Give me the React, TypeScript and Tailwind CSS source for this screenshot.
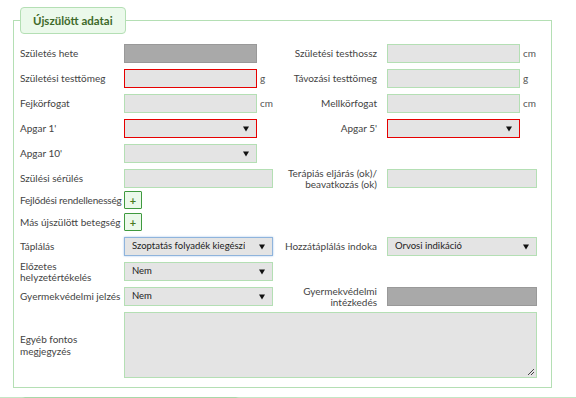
import React from 'react';

const box = 'h-[19px] bg-[#e4e4e4] border border-[#b4dfb4]';
const redBox = 'h-[19px] bg-[#e4e4e4] border border-[#e60000]';
const darkBox = 'h-[19px] bg-[#a9a9a9] border border-[#999999]';

function Arrow() {
  return (
    <svg width="6" height="6" viewBox="0 0 6 6" className="shrink-0">
      <path d="M0 0.5 H6 L3 5.5 Z" fill="#111" />
    </svg>
  );
}

function Select({ width, value, className }: { width: string; value?: string; className: string }) {
  return (
    <div className={`${className} ${width} flex items-center justify-between gap-[3px] pl-[7px] pr-[7px]`}>
      <span className="min-w-0 text-[9.5px] text-[#222] whitespace-nowrap overflow-hidden">{value}</span>
      <Arrow />
    </div>
  );
}

function Unit({ children }: { children: React.ReactNode }) {
  return <span className="ml-[3px] text-[10px] text-[#555]">{children}</span>;
}

function Left({ label, children }: { label: React.ReactNode; children?: React.ReactNode }) {
  return (
    <div className="w-[267px] shrink-0 flex items-center">
      <div className="w-[104px] shrink-0 leading-[11px] whitespace-nowrap">{label}</div>
      {children}
    </div>
  );
}

function Right({ label, children }: { label: React.ReactNode; children?: React.ReactNode }) {
  return (
    <div className="flex items-center">
      <div className="w-[90px] shrink-0 flex justify-end text-right leading-[11px] whitespace-nowrap">{label}</div>
      <div className="ml-[10px] flex items-center">{children}</div>
    </div>
  );
}

function PlusButton() {
  return (
    <div className="w-[18px] h-[18px] border border-[#3f9a3f] bg-[#ebf9eb] rounded-[1px] flex items-center justify-center text-[#4a7a1e] text-[11px] font-bold leading-none">
      +
    </div>
  );
}

export default function App() {
  return (
    <div className="w-[576px] h-[398px] bg-white overflow-hidden text-[10px] text-[#444]" style={{ fontFamily: 'Lato, "Open Sans", sans-serif' }}>
      <fieldset className="ml-[13px] mt-[7px] w-[539px] border border-[#b4dfb4] pl-[6px] pb-[9px]">
        <legend className="ml-0 px-[12px] h-[27px] flex items-center bg-[#ebf9eb] border border-[#b4dfb4] rounded-[4px] text-[11.5px] font-bold text-[#3e6a2a]">
          Újszülött adatai
        </legend>

        <div className="flex flex-col pt-[10px]">
          <div className="flex items-center h-[19px]">
            <Left label="Születés hete">
              <div className={`${darkBox} w-[133px]`} />
            </Left>
            <Right label="Születési testhossz">
              <div className={`${box} w-[133px]`} />
              <Unit>cm</Unit>
            </Right>
          </div>

          <div className="flex items-center h-[19px] mt-[6px]">
            <Left label="Születési testtömeg">
              <div className={`${redBox} w-[133px]`} />
              <Unit>g</Unit>
            </Left>
            <Right label="Távozási testtömeg">
              <div className={`${box} w-[133px]`} />
              <Unit>g</Unit>
            </Right>
          </div>

          <div className="flex items-center h-[19px] mt-[6px]">
            <Left label="Fejkörfogat">
              <div className={`${box} w-[133px]`} />
              <Unit>cm</Unit>
            </Left>
            <Right label="Mellkörfogat">
              <div className={`${box} w-[133px]`} />
              <Unit>cm</Unit>
            </Right>
          </div>

          <div className="flex items-center h-[19px] mt-[6px]">
            <Left label="Apgar 1'">
              <Select width="w-[133px]" className={redBox} />
            </Left>
            <Right label="Apgar 5'">
              <Select width="w-[133px]" className={redBox} />
            </Right>
          </div>

          <div className="flex items-center h-[19px] mt-[6px]">
            <Left label="Apgar 10'">
              <Select width="w-[133px]" className={box} />
            </Left>
          </div>

          <div className="flex items-center h-[19px] mt-[6px]">
            <Left label="Szülési sérülés">
              <div className={`${box} w-[149px]`} />
            </Left>
            <Right
              label={
                <span>
                  Terápiás eljárás (ok)/
                  <br />
                  beavatkozás (ok)
                </span>
              }
            >
              <div className={`${box} w-[150px]`} />
            </Right>
          </div>

          <div className="flex items-center h-[18px] mt-[3px]">
            <Left label={<span className="tracking-[-0.2px]">Fejlődési rendellenesség</span>}>
              <PlusButton />
            </Left>
          </div>

          <div className="flex items-center h-[18px] mt-[4px]">
            <Left label="Más újszülött betegség">
              <PlusButton />
            </Left>
          </div>

          <div className="flex items-center h-[19px] mt-[6px]">
            <Left label="Táplálás">
              <Select
                width="w-[149px]"
                value="Szoptatás folyadék kiegészí"
                className="h-[19px] bg-[#e4e4e4] border border-[#8fb4dc] shadow-[0_0_2px_#a8c8ec]"
              />
            </Left>
            <Right label="Hozzátáplálás indoka">
              <Select width="w-[150px]" value="Orvosi indikáció" className={box} />
            </Right>
          </div>

          <div className="flex items-center h-[19px] mt-[6px]">
            <Left
              label={
                <span>
                  Előzetes
                  <br />
                  helyzetértékelés
                </span>
              }
            >
              <Select width="w-[149px]" value="Nem" className={box} />
            </Left>
          </div>

          <div className="flex items-center h-[19px] mt-[6px]">
            <Left label="Gyermekvédelmi jelzés">
              <Select width="w-[149px]" value="Nem" className={box} />
            </Left>
            <Right
              label={
                <span>
                  Gyermekvédelmi
                  <br />
                  intézkedés
                </span>
              }
            >
              <div className={`${darkBox} w-[150px]`} />
            </Right>
          </div>

          <div className="flex items-center h-[66px] mt-[6px]">
            <div className="w-[104px] shrink-0 leading-[12px]">
              Egyéb fontos
              <br />
              megjegyzés
            </div>
            <div className="relative w-[413px] h-[66px] bg-[#e4e4e4] border border-[#b4dfb4]">
              <svg width="8" height="8" viewBox="0 0 8 8" className="absolute right-[1px] bottom-[1px]">
                <path d="M7 1 L1 7 M7 4 L4 7" stroke="#444" strokeWidth="1" />
              </svg>
            </div>
          </div>
        </div>
      </fieldset>

      <div className="relative mt-[9px] border-t border-[#c4e6c4]">
        <div className="absolute left-[21px] -top-[1px] w-[219px] h-[10px] bg-[#ebf9eb] border border-[#a8d8a8] rounded-t-[4px]" />
      </div>
    </div>
  );
}
